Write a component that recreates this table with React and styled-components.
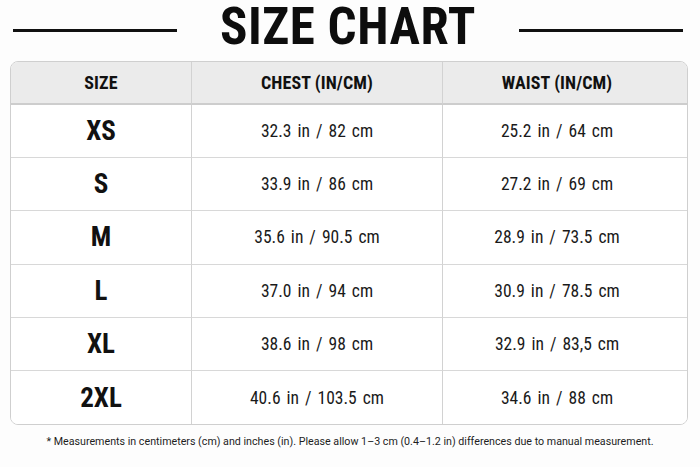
import React from "react";
import styled, { createGlobalStyle } from "styled-components";

const GlobalStyle = createGlobalStyle`
  html, body { margin: 0; padding: 0; background: #fdfdfd; }
  body { font-family: "Roboto Condensed", Roboto, sans-serif; color: #111; }
`;

const Page = styled.div`
  width: 700px;
  height: 467px;
  display: flex;
  flex-direction: column;
  box-sizing: border-box;
`;

const TitleBar = styled.header`
  display: flex;
  align-items: flex-start;
  gap: 43px;
  padding: 0 17px 0 13px;
  height: 57px;
`;

const Rule = styled.div`
  flex: 1;
  height: 2.5px;
  margin-top: 29px;
  background: #111;
`;

const Title = styled.h1`
  margin: 0;
  font-family: "Roboto Condensed", sans-serif;
  font-weight: 700;
  font-size: 51px;
  line-height: 54px;
  letter-spacing: 0.5px;
  color: #0d0d0d;
  white-space: nowrap;
`;

const Table = styled.div`
  margin: 4px 12px 0 10px;
  display: grid;
  grid-template-columns: 181px 251px 1fr;
  grid-template-rows: 43px repeat(6, 53.2px);
  border: 1px solid #cfcfcf;
  border-radius: 8px;
  overflow: hidden;
  background: #fff;
`;

const Cell = styled.div`
  display: flex;
  align-items: center;
  justify-content: center;
  padding-right: ${(p) => (p.$last ? "16px" : "0")};
  border-right: ${(p) => (p.$last ? "none" : "1px solid #d2d2d2")};
  border-bottom: ${(p) =>
    p.$head ? "2px solid #cdcdcd" : p.$bottom ? "none" : "1px solid #d8d8d8"};
  background: ${(p) => (p.$head ? "#ebebeb" : "#fff")};
  color: #111;
  white-space: nowrap;
`;

const HeadText = styled.span`
  font-weight: 700;
  font-size: 18px;
  letter-spacing: 0.1px;
`;

const SizeText = styled.span`
  font-weight: 700;
  font-size: 27px;
`;

const ValueText = styled.span`
  font-weight: 400;
  font-size: 17.5px;
  word-spacing: 2px;
  color: #1a1a1a;
`;

const Note = styled.p`
  margin: 10px 0 0;
  text-align: center;
  font-family: Roboto, "Liberation Sans", sans-serif;
  font-size: 10.7px;
  color: #1e1e1e;
`;

const rows = [
  ["XS", "32.3 in / 82 cm", "25.2 in / 64 cm"],
  ["S", "33.9 in / 86 cm", "27.2 in / 69 cm"],
  ["M", "35.6 in / 90.5 cm", "28.9 in / 73.5 cm"],
  ["L", "37.0 in / 94 cm", "30.9 in / 78.5 cm"],
  ["XL", "38.6 in / 98 cm", "32.9 in / 83,5 cm"],
  ["2XL", "40.6 in / 103.5 cm", "34.6 in / 88 cm"],
];

export default function App() {
  return (
    <Page>
      <GlobalStyle />
      <TitleBar>
        <Rule />
        <Title>SIZE CHART</Title>
        <Rule />
      </TitleBar>
      <Table>
        <Cell $head><HeadText>SIZE</HeadText></Cell>
        <Cell $head><HeadText>CHEST (IN/CM)</HeadText></Cell>
        <Cell $head $last><HeadText>WAIST (IN/CM)</HeadText></Cell>
        {rows.map((r, i) => {
          const bottom = i === rows.length - 1;
          return (
            <React.Fragment key={r[0]}>
              <Cell $bottom={bottom}><SizeText>{r[0]}</SizeText></Cell>
              <Cell $bottom={bottom}><ValueText>{r[1]}</ValueText></Cell>
              <Cell $bottom={bottom} $last><ValueText>{r[2]}</ValueText></Cell>
            </React.Fragment>
          );
        })}
      </Table>
      <Note>
        * Measurements in centimeters (cm) and inches (in). Please allow 1–3 cm (0.4–1.2 in) differences due to manual measurement.
      </Note>
    </Page>
  );
}
